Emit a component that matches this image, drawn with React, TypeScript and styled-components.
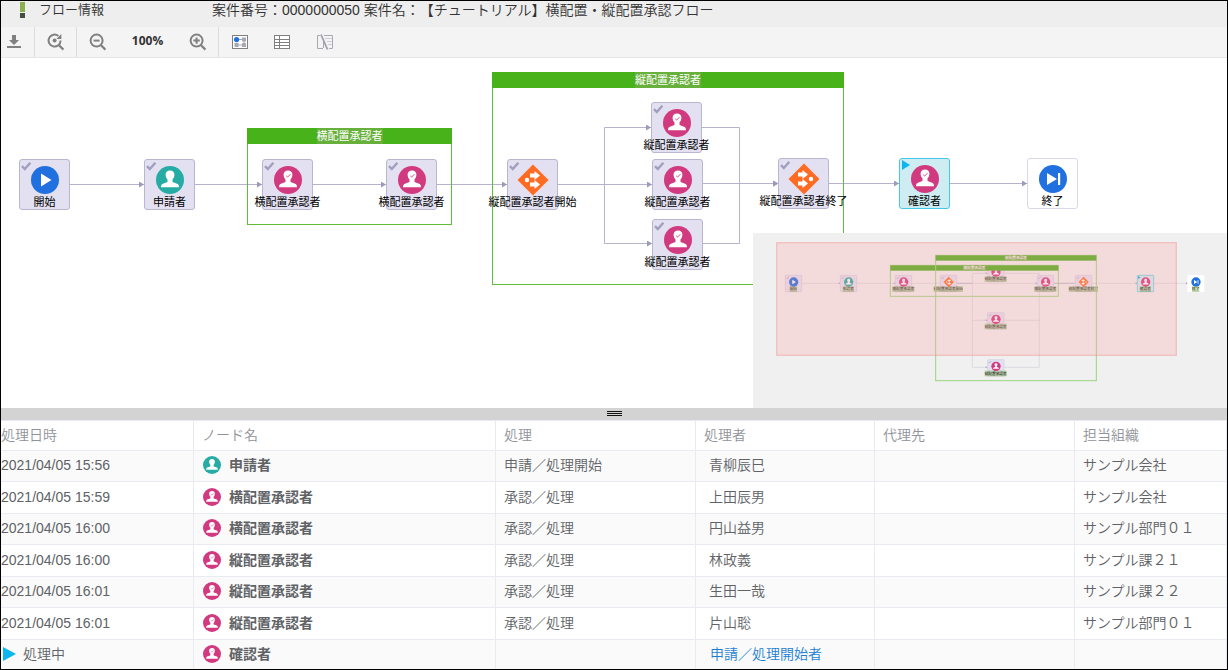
import React from 'react';
import styled, { createGlobalStyle, css } from 'styled-components';

const GlobalStyle = createGlobalStyle`
  *, *::before, *::after { box-sizing: border-box; }
  body {
    margin: 0;
    font-family: "Liberation Sans", "Noto Sans CJK JP", sans-serif;
    font-size: 14px;
    color: #606266;
    background: #fff;
    text-spacing-trim: space-all;
  }
`;

const Page = styled.div`
  display: flex;
  flex-direction: column;
  min-height: 100vh;
  border: 1px solid #000;
`;

const Header = styled.header`
  display: flex;
  align-items: flex-start;
  height: 26px;
  padding-left: 19px;
  background: #eee;
  color: #333;
  line-height: 18px;
`;

const HeaderMark = styled.svg`
  flex: none;
  margin-right: 14px;
`;

const HeaderTitle = styled.h1`
  width: 173px;
  margin: 0;
  font-size: 13px;
  font-weight: 350;
`;

const CaseInfo = styled.p`
  margin: 0;
  font-weight: 350;
  white-space: nowrap;
`;

const Toolbar = styled.div`
  display: flex;
  height: 31px;
  background: #f4f4f4;
  border-bottom: 1px solid #e6e6e6;
`;

const ToolGroup = styled.div`
  display: flex;
  align-items: stretch;
  & + & { border-left: 1px solid #dcdcdc; }
`;

const toolWidth = { edge: 33, normal: 41, wide: 42 };

const ToolButton = styled.button<{ $size?: keyof typeof toolWidth }>`
  display: flex;
  align-items: center;
  justify-content: center;
  width: ${p => toolWidth[p.$size ?? 'normal']}px;
  padding: 0 ${p => (p.$size === 'edge' ? 7 : 0)}px 0 0;
  border: 0;
  background: none;
  color: #808080;
`;

const ZoomValue = styled.span`
  width: 59px;
  text-align: center;
  font: bold 12px/28px "Open Sans", sans-serif;
  color: #333;
`;

const Canvas = styled.main`
  position: relative;
  height: 350px;
  overflow: hidden;
  background: #fff;
`;

const Edges = styled.svg`
  position: absolute;
  inset: 0;
`;

const Group = styled.section`
  position: absolute;
  border: 1px solid #5fbd38;
`;

const GroupTitle = styled.h2`
  height: 16px;
  margin: -1px;
  background: #47b21a;
  color: #fff;
  font-size: 11px;
  font-weight: 400;
  line-height: 16px;
  text-align: center;
  span {
    display: inline-block;
    background: #68b03c;
  }
`;

type State = 'done' | 'active' | 'idle';

const stateStyle = {
  done: css`background: #e3e1f1; border-color: #b9b6d0;`,
  active: css`background: #ceedf2; border-color: #45c9ea;`,
  idle: css`background: #fff; border-color: #d9d7ea;`,
};

const NodeBox = styled.div<{ $state: State }>`
  position: absolute;
  display: flex;
  flex-direction: column;
  align-items: center;
  width: 51px;
  height: 51px;
  padding-top: 4px;
  border: 1px solid;
  border-radius: 3px;
  ${p => stateStyle[p.$state]}
`;

const NodeLabel = styled.span`
  color: #000;
  font-size: 11px;
  line-height: 12px;
  white-space: nowrap;
`;

const StateBadge = styled.svg`
  position: absolute;
  left: 1px;
  top: 1px;
`;

const MiniMap = styled.aside`
  position: absolute;
  right: 0;
  bottom: 0;
  width: 474px;
  height: 175px;
  background: #f0f0f0;
  svg { display: block; }
`;

const Splitter = styled.div`
  display: flex;
  align-items: center;
  justify-content: center;
  height: 12px;
  background: #d3d3d3;
`;

const History = styled.table`
  width: 100%;
  table-layout: fixed;
  border-spacing: 0;
  line-height: 20px;
  font-weight: 350;
`;

const Col = styled.col<{ $w?: number }>`
  ${p => p.$w && css`width: ${p.$w}px;`}
`;

const HeadCell = styled.th`
  height: 31px;
  padding: 0 8px 2px;
  border: 0 solid #e9ebf3;
  border-width: 1px 1px 1px 0;
  color: #909399;
  font-weight: 350;
  text-align: left;
  &:first-child { padding-left: 0; }
`;

const Row = styled.tr`
  height: 32px;
  background: #fff;
  &:nth-child(odd) {
    height: 31px;
    background: #fafafa;
  }
  &:last-child { height: 29px; }
  &:last-child td { border-bottom: 0; }
`;

const Cell = styled.td<{ $indent?: number }>`
  padding: 0 0 2px ${p => p.$indent ?? 8}px;
  border: 0 solid #e9ebf3;
  border-width: 0 1px 1px 0;
  white-space: nowrap;
  &:first-child { padding-left: 0; }
`;

const Inline = styled.span<{ $gap: number }>`
  display: flex;
  align-items: center;
  gap: ${p => p.$gap}px;
`;

const NodeName = styled.strong`
  font-weight: 700;
`;

const PersonLink = styled.a`
  color: #1a7fd4;
  text-decoration: none;
`;

type Kind = 'start' | 'apply' | 'approve' | 'split' | 'join' | 'end';

const PINK = '#d23a80';
const TEAL = '#27aca5';
const BLUE = '#2070e0';
const ORANGE = '#ff6b22';

/* Glyph drawn round its own centre, 28 units across. */
function Glyph({ kind }: { kind: Kind }) {
  if (kind === 'split' || kind === 'join') {
    const ax = kind === 'split' ? -3 : -6;
    return (
      <g>
        <path d="M0 -15.5L15.5 0L0 15.5L-15.5 0Z" fill={ORANGE} />
        <circle cx={kind === 'split' ? -6 : 7} cy="0" r="2.2" fill="#fff" />
        {[-4.5, 4.5].map(y => (
          <path key={y} transform={`translate(${ax} ${y})`} d="M0 -2H4.5V-4.4L10 0L4.5 4.4V2H0Z" fill="#fff" />
        ))}
      </g>
    );
  }
  const fill = kind === 'approve' ? PINK : kind === 'apply' ? TEAL : BLUE;
  return (
    <g>
      <circle r="14" fill={fill} />
      {kind === 'start' && <path d="M-4 -6.5V6.5L6.5 0Z" fill="#fff" />}
      {kind === 'end' && <path d="M-6 -6V6L4 0ZM5 -6H7.2V6H5Z" fill="#fff" />}
      {(kind === 'apply' || kind === 'approve') && (
        <path
          d="M0 -9.4C2.8 -9.4 4.5 -7.8 4.4 -5.2C4.3 -3 3.6 -1.6 2.5 -.4V1.8C2.9 2.5 4.6 2.8 6.4 3.4C8.4 4.1 9 5 9 7.2H-9C-9 5 -8.4 4.1 -6.4 3.4C-4.6 2.8 -2.9 2.5 -2.5 1.8V-.4C-3.6 -1.6 -4.3 -3 -4.4 -5.2C-4.5 -7.8 -2.8 -9.4 0 -9.4Z"
          fill="#fff"
        />
      )}
      {kind === 'approve' && <path d="M-1.8 -4.2L-.4 -2.9L2.4 -5.8" fill="none" stroke={PINK} strokeWidth=".9" />}
    </g>
  );
}

function NodeIcon({ kind, size }: { kind: Kind; size: number }) {
  return (
    <svg width={size} height={size} viewBox="-16 -16 32 32" aria-hidden="true">
      <Glyph kind={kind} />
    </svg>
  );
}

function PersonIcon({ kind }: { kind: Kind }) {
  return (
    <svg width="18" height="18" viewBox="-14 -14 28 28" aria-hidden="true">
      <Glyph kind={kind} />
    </svg>
  );
}

interface FlowNodeData {
  x: number;
  y: number;
  kind: Kind;
  label: string;
  state?: State;
}

const nodes: FlowNodeData[] = [
  { x: 18, y: 101, kind: 'start', label: '開始' },
  { x: 143, y: 101, kind: 'apply', label: '申請者' },
  { x: 261, y: 101, kind: 'approve', label: '横配置承認者' },
  { x: 385, y: 101, kind: 'approve', label: '横配置承認者' },
  { x: 506, y: 101, kind: 'split', label: '縦配置承認者開始' },
  { x: 650, y: 44, kind: 'approve', label: '縦配置承認者' },
  { x: 651, y: 101, kind: 'approve', label: '縦配置承認者' },
  { x: 651, y: 161, kind: 'approve', label: '縦配置承認者' },
  { x: 777, y: 100, kind: 'join', label: '縦配置承認者終了' },
  { x: 898, y: 100, kind: 'approve', label: '確認者', state: 'active' },
  { x: 1026, y: 100, kind: 'end', label: '終了', state: 'idle' },
];

const groups = [
  { x: 246, y: 70, w: 205, h: 97, label: '横配置承認者' },
  { x: 491, y: 14, w: 352, h: 213, label: '縦配置承認者' },
];

const edgePaths = [
  'M69 126.5H143', 'M194 126.5H261', 'M312 126.5H385', 'M436 126.5H506',
  'M557 126.5H603.5V69.5H650', 'M557 126.5H651', 'M557 126.5H603.5V185.5H651',
  'M701 69.5H738.5V125.5H777', 'M702 125.5H777', 'M702 185.5H738.5V125.5H777',
  'M828 125.5H898', 'M949 125.5H1026',
];

function FlowNode({ node }: { node: FlowNodeData }) {
  const state = node.state ?? 'done';
  return (
    <NodeBox $state={state} style={{ left: node.x, top: node.y }}>
      {state !== 'idle' && (
        <StateBadge width="11" height="11" viewBox="0 0 11 11" aria-hidden="true">
          {state === 'done'
            ? <path d="M1 5.2L3.8 8L9.4 1.8" fill="none" stroke="#a09fbe" strokeWidth="2.4" />
            : <path d="M1 0V10L9 5Z" fill="#0cb6ef" />}
        </StateBadge>
      )}
      <NodeIcon kind={node.kind} size={32} />
      <NodeLabel>{node.label}</NodeLabel>
    </NodeBox>
  );
}

const miniNodes: FlowNodeData[] = [
  { x: 97, y: 127, kind: 'start', label: '開始' },
  { x: 262, y: 127, kind: 'apply', label: '申請者' },
  { x: 427, y: 127, kind: 'approve', label: '横配置承認者' },
  { x: 562, y: 127, kind: 'split', label: '縦配置承認者開始' },
  { x: 704, y: 97, kind: 'approve', label: '縦配置承認者' },
  { x: 853, y: 127, kind: 'approve', label: '横配置承認者' },
  { x: 967, y: 127, kind: 'join', label: '縦配置承認者終了' },
  { x: 704, y: 239, kind: 'approve', label: '縦配置承認者' },
  { x: 704, y: 380, kind: 'approve', label: '縦配置承認者' },
  { x: 1153, y: 127, kind: 'approve', label: '確認者', state: 'active' },
  { x: 1304, y: 127, kind: 'end', label: '終了', state: 'idle' },
];

const miniFill = { done: '#e3e1f1', active: '#ceedf2', idle: '#fff' };
const miniStroke = { done: '#cfcce0', active: '#45c9ea', idle: '#fff' };

const miniGroups = [
  { x: 412, y: 97, w: 504, h: 93, label: '横配置承認者' },
  { x: 548, y: 67, w: 482, h: 376, label: '縦配置承認者' },
];

function MiniMapDrawing() {
  return (
    <svg width="474" height="175" viewBox="0 0 1422 525" role="img" aria-label="フロー全体図">
      <g fill="none" stroke="#d3d2dc" strokeWidth="2">
        <path d="M146 151H262M311 151H427M476 151H853M902 151H967M1016 151H1153M1202 151H1304" />
        <path d="M658 121H703M658 121V403H703M658 262H703M752 121H859V403H752M752 262H859" />
        <path d="M612 151H658M902 151H967" stroke="#a9a7bf" />
      </g>
      {[[262, 151], [427, 151], [703, 121], [703, 262], [703, 403], [853, 151], [1153, 151], [1304, 151]].map(([x, y]) => (
        <path key={`${x}-${y}`} d={`M${x - 5} ${y - 3}L${x} ${y}L${x - 5} ${y + 3}Z`} fill="#9c9ab8" />
      ))}
      {miniNodes.map((n, i) => {
        const state = n.state ?? 'done';
        const w = n.label.length * 11;
        return (
          <g key={i} transform={`translate(${n.x} ${n.y})`}>
            <rect width="49" height="49" rx="2" fill={miniFill[state]} stroke={miniStroke[state]} strokeWidth="2" />
            {state === 'done' && <path d="M3 7L6 10L11 4" fill="none" stroke="#a09fbe" strokeWidth="2" />}
            {state === 'active' && <path d="M2 2V11L10 6Z" fill="#0cb6ef" />}
            <g transform="translate(25 20)"><Glyph kind={n.kind} /></g>
            <rect x={24 - w / 2} y="33" width={w} height="17" fill="#5f9a2c" fillOpacity=".4" />
            <text x="24" y="45" fontSize="11" textAnchor="middle" fill="#333">{n.label}</text>
          </g>
        );
      })}
      {miniGroups.map(g => (
        <g key={g.label}>
          <rect x={g.x} y={g.y} width={g.w} height={g.h} fill="none" stroke="#9bd580" strokeWidth="3" />
          <rect x={g.x} y={g.y} width={g.w} height="16" fill="#4eb020" />
          <rect x={g.x + g.w / 2 - 33} y={g.y} width="66" height="14" fill="#77ad4e" />
          <text x={g.x + g.w / 2} y={g.y + 12} fontSize="11" textAnchor="middle" fill="#fff">{g.label}</text>
        </g>
      ))}
      <rect x="71" y="29" width="1199" height="338" fill="#ffa2a2" fillOpacity=".27" stroke="#f08c8c" strokeOpacity=".4" strokeWidth="4" />
    </svg>
  );
}

const columns = [
  { label: '処理日時', width: 193 },
  { label: 'ノード名', width: 302 },
  { label: '処理', width: 200 },
  { label: '処理者', width: 179 },
  { label: '代理先', width: 200 },
  { label: '担当組織' },
];

const records: { date: string; node: string; action: string; person: string; org: string; kind: Kind }[] = [
  { date: '2021/04/05 15:56', node: '申請者', action: '申請／処理開始', person: '青柳辰巳', org: 'サンプル会社', kind: 'apply' },
  { date: '2021/04/05 15:59', node: '横配置承認者', action: '承認／処理', person: '上田辰男', org: 'サンプル会社', kind: 'approve' },
  { date: '2021/04/05 16:00', node: '横配置承認者', action: '承認／処理', person: '円山益男', org: 'サンプル部門０１', kind: 'approve' },
  { date: '2021/04/05 16:00', node: '縦配置承認者', action: '承認／処理', person: '林政義', org: 'サンプル課２１', kind: 'approve' },
  { date: '2021/04/05 16:01', node: '縦配置承認者', action: '承認／処理', person: '生田一哉', org: 'サンプル課２２', kind: 'approve' },
  { date: '2021/04/05 16:01', node: '縦配置承認者', action: '承認／処理', person: '片山聡', org: 'サンプル部門０１', kind: 'approve' },
];

function Lens({ children }: { children: React.ReactNode }) {
  return (
    <svg width="18" height="18" viewBox="0 0 18 18" fill="none" stroke="currentColor" strokeWidth="2" aria-hidden="true">
      <path d="M12 12.3L16.4 16.6" strokeWidth="2.2" />
      {children}
    </svg>
  );
}

export default function App() {
  return (
    <Page>
      <GlobalStyle />
      <Header>
        <HeaderMark width="5" height="18" viewBox="0 0 5 18" aria-hidden="true">
          <rect y="1" width="5" height="10" fill="#8cb050" />
          <rect y="12" width="5" height="5" fill="#44503f" />
        </HeaderMark>
        <HeaderTitle>フロー情報</HeaderTitle>
        <CaseInfo>案件番号：0000000050 案件名：【チュートリアル】横配置・縦配置承認フロー</CaseInfo>
      </Header>

      <Toolbar role="toolbar" aria-label="フロー操作">
        <ToolGroup>
          <ToolButton $size="edge" aria-label="ダウンロード">
            <svg width="14" height="14" viewBox="0 0 14 14" fill="currentColor" aria-hidden="true">
              <path d="M5 0H9V5H12L7 10L2 5H5ZM0 11H14V13H0Z" />
            </svg>
          </ToolButton>
        </ToolGroup>
        <ToolGroup>
          <ToolButton aria-label="表示をリセット">
            <Lens>
              <path d="M11.4 2.9A6 6 0 1 0 13.6 7.6" />
              <path d="M14.4 1V6H9.4Z" fill="currentColor" stroke="none" />
              <circle cx="7.6" cy="7.6" r="2" fill="currentColor" stroke="none" />
            </Lens>
          </ToolButton>
        </ToolGroup>
        <ToolGroup>
          <ToolButton aria-label="縮小">
            <Lens>
              <circle cx="7.6" cy="7.6" r="6" />
              <path d="M4.6 7.6H10.6" />
            </Lens>
          </ToolButton>
          <ZoomValue>100%</ZoomValue>
          <ToolButton aria-label="拡大">
            <Lens>
              <circle cx="7.6" cy="7.6" r="6" />
              <path d="M4.4 7.6H10.8M7.6 4.4V10.8" />
            </Lens>
          </ToolButton>
        </ToolGroup>
        <ToolGroup>
          <ToolButton $size="wide" aria-label="全体図">
            <svg width="16" height="14" viewBox="0 0 16 14" aria-hidden="true">
              <rect x=".5" y=".5" width="15" height="13" fill="#fff" stroke="#808080" />
              <path d="M4.5 4.5H12V10H4.5" fill="none" stroke="#a8a8b4" />
              <rect x="10" y="2.5" width="4" height="4" fill="#a8a8b4" />
              <rect x="10" y="8" width="4" height="4" fill="#a8a8b4" />
              <rect x="2.5" y="8" width="4" height="4" fill="#a8a8b4" />
              <circle cx="4.6" cy="4.6" r="2.6" fill="#2070e0" />
            </svg>
          </ToolButton>
          <ToolButton $size="wide" aria-label="一覧">
            <svg width="16" height="14" viewBox="0 0 16 14" fill="#fff" stroke="#808080" aria-hidden="true">
              <rect x=".5" y=".5" width="15" height="13" />
              <path d="M0 4.5H16M0 7.5H16M0 10.5H16M5.5 .5V13.5" />
            </svg>
          </ToolButton>
          <ToolButton $size="wide" aria-label="比較">
            <svg width="17" height="16" viewBox="0 0 17 16" fill="none" aria-hidden="true">
              <path d="M7 14.5H1.5V1.5H4M8 1.5H16.5V14.5H13" stroke="#a9a9b4" />
              <path d="M9 4.5H16M11 7.5H16M12 10.5H16" stroke="#ceced6" />
              <path d="M7.5 7V14" stroke="#a9a9b4" />
              <path d="M5 .5L11.5 15.5" stroke="#a0a0ac" strokeWidth="1.8" />
            </svg>
          </ToolButton>
        </ToolGroup>
      </Toolbar>

      <Canvas>
        <Edges width="100%" height="100%" aria-hidden="true">
          <defs>
            <marker id="arrow" markerWidth="6" markerHeight="6" refX="5" refY="3" orient="auto" markerUnits="userSpaceOnUse">
              <path d="M0 0L5 3L0 6Z" fill="#9c9aba" />
            </marker>
          </defs>
          {edgePaths.map(d => (
            <path key={d} d={d} fill="none" stroke="#b5b3cb" markerEnd="url(#arrow)" />
          ))}
        </Edges>
        {groups.map(g => (
          <Group key={g.label} style={{ left: g.x, top: g.y, width: g.w, height: g.h }}>
            <GroupTitle><span>{g.label}</span></GroupTitle>
          </Group>
        ))}
        {nodes.map((n, i) => <FlowNode key={i} node={n} />)}
        <MiniMap><MiniMapDrawing /></MiniMap>
      </Canvas>

      <Splitter role="separator" aria-orientation="horizontal">
        <svg width="16" height="6" viewBox="0 0 16 6" fill="#111" aria-hidden="true">
          <path d="M1 0H16V1H1ZM1 2H16V3H1ZM1 4H16V5H1Z" />
        </svg>
      </Splitter>

      <History>
        <colgroup>
          {columns.map(c => <Col key={c.label} $w={c.width} />)}
        </colgroup>
        <thead>
          <tr>{columns.map(c => <HeadCell key={c.label} scope="col">{c.label}</HeadCell>)}</tr>
        </thead>
        <tbody>
          {records.map((r, i) => (
            <Row key={i}>
              <Cell>{r.date}</Cell>
              <Cell $indent={9}><Inline $gap={8}><PersonIcon kind={r.kind} /><NodeName>{r.node}</NodeName></Inline></Cell>
              <Cell>{r.action}</Cell>
              <Cell $indent={13}>{r.person}</Cell>
              <Cell />
              <Cell>{r.org}</Cell>
            </Row>
          ))}
          <Row>
            <Cell>
              <Inline $gap={7}>
                <svg width="15" height="16" viewBox="0 0 15 16" aria-hidden="true">
                  <path d="M2 1V15L15 8Z" fill="#0cb6ef" />
                </svg>
                処理中
              </Inline>
            </Cell>
            <Cell $indent={9}><Inline $gap={8}><PersonIcon kind="approve" /><NodeName>確認者</NodeName></Inline></Cell>
            <Cell />
            <Cell $indent={14}><PersonLink href="#applicant">申請／処理開始者</PersonLink></Cell>
            <Cell />
            <Cell />
          </Row>
        </tbody>
      </History>
    </Page>
  );
}
